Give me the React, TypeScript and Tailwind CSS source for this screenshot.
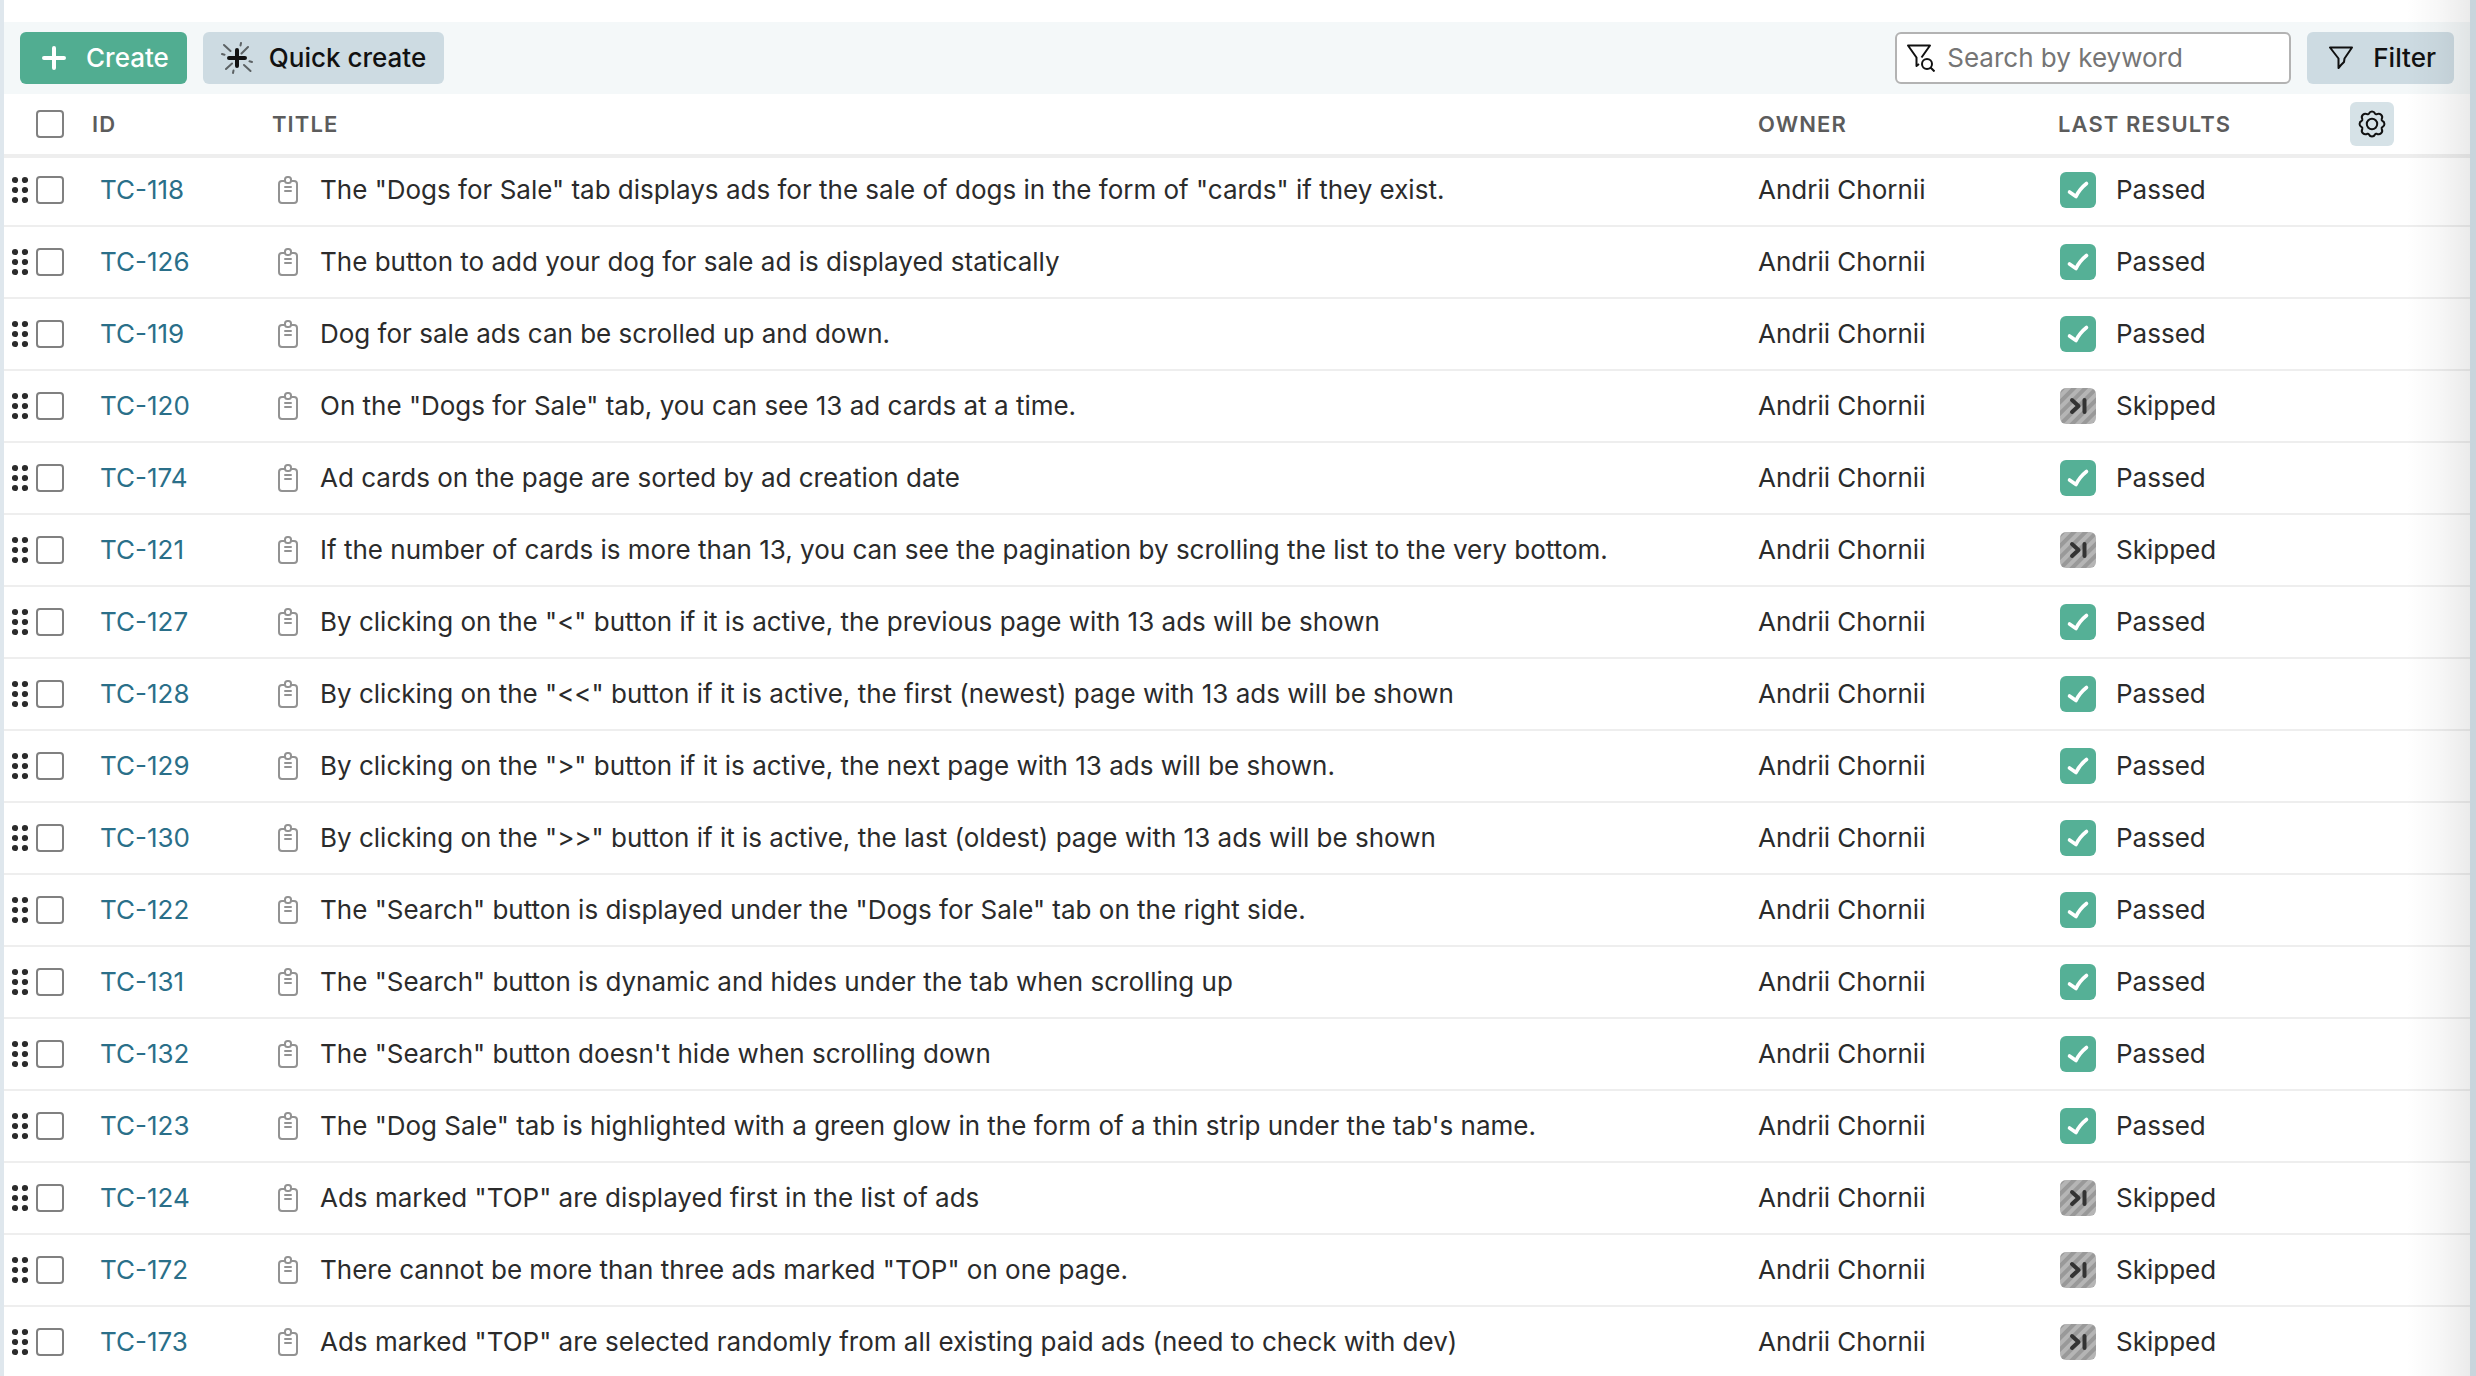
import React from "react";

type Result = "Passed" | "Skipped";
type TestCase = { id: string; title: string; result: Result };

const OWNER = "Andrii Chornii";

const CASES: TestCase[] = [
  { id: "TC-118", title: 'The "Dogs for Sale" tab displays ads for the sale of dogs in the form of "cards" if they exist.', result: "Passed" },
  { id: "TC-126", title: "The button to add your dog for sale ad is displayed statically", result: "Passed" },
  { id: "TC-119", title: "Dog for sale ads can be scrolled up and down.", result: "Passed" },
  { id: "TC-120", title: 'On the "Dogs for Sale" tab, you can see 13 ad cards at a time.', result: "Skipped" },
  { id: "TC-174", title: "Ad cards on the page are sorted by ad creation date", result: "Passed" },
  { id: "TC-121", title: "If the number of cards is more than 13, you can see the pagination by scrolling the list to the very bottom.", result: "Skipped" },
  { id: "TC-127", title: 'By clicking on the "<" button if it is active, the previous page with 13 ads will be shown', result: "Passed" },
  { id: "TC-128", title: 'By clicking on the "<<" button if it is active, the first (newest) page with 13 ads will be shown', result: "Passed" },
  { id: "TC-129", title: 'By clicking on the ">" button if it is active, the next page with 13 ads will be shown.', result: "Passed" },
  { id: "TC-130", title: 'By clicking on the ">>" button if it is active, the last (oldest) page with 13 ads will be shown', result: "Passed" },
  { id: "TC-122", title: 'The "Search" button is displayed under the "Dogs for Sale" tab on the right side.', result: "Passed" },
  { id: "TC-131", title: 'The "Search" button is dynamic and hides under the tab when scrolling up', result: "Passed" },
  { id: "TC-132", title: 'The "Search" button doesn\'t hide when scrolling down', result: "Passed" },
  { id: "TC-123", title: 'The "Dog Sale" tab is highlighted with a green glow in the form of a thin strip under the tab\'s name.', result: "Passed" },
  { id: "TC-124", title: 'Ads marked "TOP" are displayed first in the list of ads', result: "Skipped" },
  { id: "TC-172", title: 'There cannot be more than three ads marked "TOP" on one page.', result: "Skipped" },
  { id: "TC-173", title: 'Ads marked "TOP" are selected randomly from all existing paid ads (need to check with dev)', result: "Skipped" },
];

function PlusIcon() {
  return (
    <svg className="size-6" viewBox="0 0 24 24" fill="none" stroke="currentColor" strokeWidth="4" strokeLinecap="round" aria-hidden="true">
      <path d="M12 2v20M2 12h20" />
    </svg>
  );
}

function SparkPlusIcon() {
  return (
    <svg className="size-8" viewBox="0 0 32 32" fill="none" stroke="currentColor" strokeLinecap="round" aria-hidden="true">
      <path d="M16 8v16M8 16h16" strokeWidth="4" />
      <g strokeWidth="2" opacity="0.6">
        <path d="M3 3l6.500 6M27 5l-6.500 6.500M5 27l6-5.500M23 23l6.500 6M20 1l-.5 2.500M12.500 28.500l-.5 2.500M1 12l2.500.7M28.500 19.300l2.500.7" />
      </g>
    </svg>
  );
}

function FunnelIcon() {
  return (
    <svg className="size-6" viewBox="0 0 24 24" fill="none" stroke="currentColor" strokeWidth="2" strokeLinejoin="round" aria-hidden="true">
      <path d="M1 1.500h22l-7.500 11-.5 3.500-3 3-2.500 3V12.500z" />
    </svg>
  );
}

function FunnelSearchIcon() {
  return (
    <svg className="size-7" viewBox="0 0 28 28" fill="none" stroke="currentColor" strokeWidth="2" strokeLinejoin="round" aria-hidden="true">
      <path d="M14.500 13.500L23 1.500H1l8.500 12V22l2.500-2" />
      <circle cx="20" cy="20" r="5" />
      <path d="M23.500 23.500l4 4" />
    </svg>
  );
}

function GearIcon() {
  return (
    <svg className="size-7" viewBox="0 0 28 28" fill="none" stroke="currentColor" strokeWidth="2" strokeLinejoin="round" aria-hidden="true">
      <circle cx="14" cy="14" r="5.200" />
      <path d="M11 3.500a3.300 3.300 0 0 1 6 0q.6 1.100 1.800.7a3.600 3.600 0 0 1 4.900 4.900q-.4 1.300.8 1.900a3.300 3.300 0 0 1 0 6q-1.200.6-.8 1.900a3.600 3.600 0 0 1-4.900 4.900q-1.200-.4-1.800.7a3.300 3.300 0 0 1-6 0q-.6-1.100-1.800-.7a3.600 3.600 0 0 1-4.900-4.900q.4-1.300-.8-1.900a3.300 3.300 0 0 1 0-6q1.200-.6.8-1.900a3.600 3.600 0 0 1 4.900-4.900q1.200.4 1.800-.7z" />
    </svg>
  );
}

function ClipboardIcon() {
  return (
    <svg className="h-7 w-5 shrink-0 text-[#929292]" viewBox="0 0 20 28" fill="none" stroke="currentColor" strokeWidth="2" strokeLinecap="round" aria-hidden="true">
      <path d="M6.500 5H4a3 3 0 0 0-3 3v16a3 3 0 0 0 3 3h12a3 3 0 0 0 3-3V8a3 3 0 0 0-3-3h-2.500" />
      <rect x="7" y="1" width="6" height="6" rx="2.500" />
      <path d="M7 11h6M7 15h6" />
    </svg>
  );
}

function DragDots() {
  return (
    <svg className="h-7 w-4 shrink-0 text-[#2b2b2b]" viewBox="0 0 16 28" fill="currentColor" aria-hidden="true">
      <circle cx="3" cy="4" r="3.100" />
      <circle cx="13" cy="4" r="3.100" />
      <circle cx="3" cy="14" r="3.100" />
      <circle cx="13" cy="14" r="3.100" />
      <circle cx="3" cy="24" r="3.100" />
      <circle cx="13" cy="24" r="3.100" />
    </svg>
  );
}

function PassedIcon() {
  return (
    <svg className="size-9 shrink-0" viewBox="0 0 36 36" aria-hidden="true">
      <rect width="36" height="36" rx="6" fill="#55b096" />
      <path d="M9.500 20l6.500 4.500q3.500-7.500 10.500-13" fill="none" stroke="#fff" strokeWidth="3.600" strokeLinecap="round" strokeLinejoin="round" />
    </svg>
  );
}

function SkippedIcon() {
  return (
    <svg className="size-9 shrink-0" viewBox="0 0 36 36" aria-hidden="true">
      <defs>
        <pattern id="skip-stripes" width="8" height="8" patternUnits="userSpaceOnUse" patternTransform="rotate(45)">
          <rect width="8" height="8" fill="#b5b5b5" />
          <rect width="4" height="8" fill="#999" />
        </pattern>
      </defs>
      <rect width="36" height="36" rx="6" fill="url(#skip-stripes)" />
      <path d="M12 12l6.500 6-6.500 6M24.500 12v12" fill="none" stroke="#333" strokeWidth="4" strokeLinecap="round" strokeLinejoin="round" />
    </svg>
  );
}

function Checkbox({ label }: { label: string }) {
  return (
    <input
      type="checkbox"
      aria-label={label}
      className="size-7 shrink-0 appearance-none rounded-sm border-2 border-[#808080] bg-white checked:bg-[#51ad91]"
    />
  );
}

function Toolbar() {
  return (
    <div className="flex items-center gap-4 bg-[#f4f8f9] py-2.5 pr-4 pl-4">
      <button type="button" className="flex h-13 items-center gap-5 rounded-md bg-[#51ad91] pr-[18px] pl-[22px] font-medium text-white">
        <PlusIcon />
        Create
      </button>
      <button type="button" className="flex h-13 items-center gap-4 rounded-md bg-[#cddbe2] px-[18px] font-medium text-[#111]">
        <SparkPlusIcon />
        Quick create
      </button>
      <label className="ml-auto flex h-13 w-[396px] items-center gap-3 rounded-md border-2 border-[#b3b3b3] bg-white px-2.5 text-[#111]">
        <FunnelSearchIcon />
        <input type="search" aria-label="Search by keyword" placeholder="Search by keyword" className="min-w-0 flex-1 outline-none placeholder:text-[#757575]" />
      </label>
      <button type="button" className="flex h-13 items-center gap-5 rounded-md bg-[#cddbe2] pr-[18px] pl-[22px] font-medium text-[#111]">
        <FunnelIcon />
        Filter
      </button>
    </div>
  );
}

function CaseRow({ item }: { item: TestCase }) {
  return (
    <tr className="h-18">
      <td className="border-b-2 border-[#eee] pl-2">
        <div className="flex items-center gap-2">
          <DragDots />
          <Checkbox label={`Select ${item.id}`} />
        </div>
      </td>
      <td className="border-b-2 border-[#eee] pl-3">
        <a href={`#${item.id}`} className="text-[#2a6f89]">{item.id}</a>
      </td>
      <td className="border-b-2 border-[#eee] pl-1.5">
        <div className="flex items-center gap-[22px]">
          <ClipboardIcon />
          {item.title}
        </div>
      </td>
      <td className="border-b-2 border-[#eee]">{OWNER}</td>
      <td className="border-b-2 border-[#eee] pl-0.5">
        <div className="flex items-center gap-5">
          {item.result === "Passed" ? <PassedIcon /> : <SkippedIcon />}
          {item.result}
        </div>
      </td>
      <td className="border-b-2 border-[#eee]" />
    </tr>
  );
}

export default function App() {
  return (
    <main className="relative h-screen overflow-hidden border-r-6 border-l-4 border-r-[#c8d5dc] border-l-[#dfe7ed] bg-white pt-[22px] font-[Inter,sans-serif] text-[26px] leading-8 text-[#2b2b2b] [font-optical-sizing:none]">
      <Toolbar />
      <table className="w-full table-fixed border-separate border-spacing-0 text-left">
        <colgroup>
          <col className="w-[84px]" />
          <col className="w-[184px]" />
          <col />
          <col className="w-[300px]" />
          <col className="w-[288px]" />
          <col className="w-[124px]" />
        </colgroup>
        <thead className="relative z-10 bg-white shadow-[0_3px_0_#eee]">
          <tr className="h-[61px] text-[22px] tracking-wider text-[#5c5c5c]">
            <th scope="col" className="border-b border-[#eee] pl-8">
              <div className="flex items-center">
                <Checkbox label="Select all test cases" />
              </div>
            </th>
            <th scope="col" className="border-b border-[#eee] pl-1 font-semibold">ID</th>
            <th scope="col" className="border-b border-[#eee] font-semibold">TITLE</th>
            <th scope="col" className="border-b border-[#eee] font-semibold">OWNER</th>
            <th scope="col" className="border-b border-[#eee] font-semibold">LAST RESULTS</th>
            <th scope="col" className="border-b border-[#eee] pl-1">
              <button type="button" aria-label="Table settings" className="flex size-11 items-center justify-center rounded-md bg-[#d6e2e7] text-[#111]">
                <GearIcon />
              </button>
            </th>
          </tr>
        </thead>
        <tbody>
          {CASES.map((item) => (
            <CaseRow key={item.id} item={item} />
          ))}
        </tbody>
      </table>
      <div className="pointer-events-none absolute inset-y-0 right-0 z-20 w-16 bg-linear-to-l from-black/8 via-black/3 to-transparent" />
    </main>
  );
}
